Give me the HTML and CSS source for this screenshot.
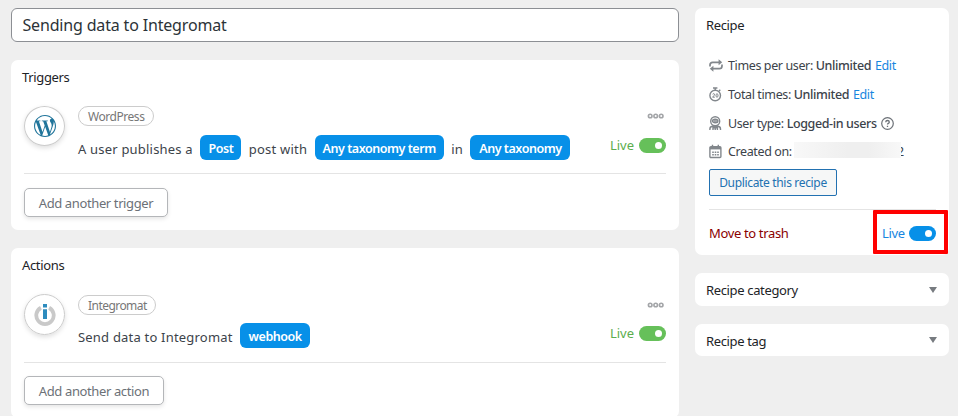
FILE: index.html
```html
<!DOCTYPE html>
<html lang="en">
<head>
<meta charset="utf-8">
<title>Recipe editor</title>
<link rel="stylesheet" href="styles.css">
</head>
<body>
<div class="layout">
  <main class="main">
    <div class="title-field"><span>Sending data to Integromat</span></div>

    <section class="card items-card">
      <h2 class="card-title">Triggers</h2>
      <div class="item">
        <div class="app-icon">
          <svg width="22" height="22" viewBox="0 0 24 24" fill="#21759b"><path d="M21.469 6.825c.84 1.537 1.318 3.3 1.318 5.175 0 3.979-2.156 7.456-5.363 9.325l3.295-9.527c.615-1.54.82-2.771.82-3.864 0-.405-.026-.78-.07-1.11m-7.981.105c.647-.03 1.232-.105 1.232-.105.582-.075.514-.93-.067-.899 0 0-1.755.135-2.88.135-1.064 0-2.85-.15-2.85-.15-.585-.03-.661.855-.075.885 0 0 .54.061 1.125.09l1.68 4.605-2.37 7.08L5.354 6.9c.649-.03 1.234-.1 1.234-.1.585-.075.516-.93-.065-.896 0 0-1.746.138-2.874.138-.2 0-.438-.008-.69-.015C4.911 3.15 8.235 1.215 12 1.215c2.809 0 5.365 1.072 7.286 2.833-.046-.003-.091-.009-.141-.009-1.06 0-1.812.923-1.812 1.914 0 .89.513 1.643 1.06 2.531.411.72.89 1.643.89 2.977 0 .915-.354 1.994-.821 3.479l-1.075 3.585-3.9-11.61.001.014zM12 22.784c-1.059 0-2.081-.153-3.048-.437l3.237-9.406 3.315 9.087c.024.053.05.101.078.149-1.12.393-2.325.609-3.582.609M1.211 12c0-1.564.336-3.05.935-4.39L7.29 21.709C3.694 19.96 1.212 16.271 1.211 12M12 0C5.385 0 0 5.385 0 12s5.385 12 12 12 12-5.385 12-12S18.615 0 12 0"/></svg>
        </div>
        <div class="item-body">
          <span class="app-name">WordPress</span>
          <div class="sentence">
            <span>A user publishes a</span><b class="token token-post">Post</b><span>post with</span><b class="token token-term">Any taxonomy term</b><span>in</span><b class="token token-tax">Any taxonomy</b>
          </div>
        </div>
        <div class="item-side">
          <svg class="dots" width="17" height="6" viewBox="0 0 17 6" fill="none" stroke="#a3a5a8" stroke-width="1.6"><circle cx="3.200" cy="3" r="1.800"/><circle cx="8.700" cy="3" r="1.800"/><circle cx="14.200" cy="3" r="1.800"/></svg>
          <div class="live live-green"><span>Live</span><i class="switch"></i></div>
        </div>
      </div>
      <button class="add-button add-trigger">Add another trigger</button>
    </section>

    <section class="card items-card">
      <h2 class="card-title">Actions</h2>
      <div class="item item-action">
        <div class="app-icon">
          <svg width="22" height="24" viewBox="0 0 22 24"><path d="M6.900 4.700A8.700 8.700 0 1 0 15.100 4.700" fill="none" stroke="#c9c9c9" stroke-width="3.800"/><path d="M9 1h4v3.600H9zM9 6.200h4V16H9z" fill="#2e8cbe"/></svg>
        </div>
        <div class="item-body">
          <span class="app-name">Integromat</span>
          <div class="sentence">
            <span>Send data to Integromat</span><b class="token token-hook">webhook</b>
          </div>
        </div>
        <div class="item-side">
          <svg class="dots" width="17" height="6" viewBox="0 0 17 6" fill="none" stroke="#a3a5a8" stroke-width="1.6"><circle cx="3.200" cy="3" r="1.800"/><circle cx="8.700" cy="3" r="1.800"/><circle cx="14.200" cy="3" r="1.800"/></svg>
          <div class="live live-green"><span>Live</span><i class="switch"></i></div>
        </div>
      </div>
      <button class="add-button add-action">Add another action</button>
    </section>
  </main>

  <aside class="sidebar">
    <section class="card recipe-card">
      <h2 class="card-title">Recipe</h2>
      <ul class="details">
        <li>
          <svg width="14" height="14" viewBox="0 0 14 14" fill="none" stroke="#82878c" stroke-width="1.700"><path d="M1 7.500V6Q1 3.300 3.700 3.300H10.500M13 5.500V7Q13 9.700 10.300 9.700H3.500"/><path d="M9.600 .3l3.600 3-3.600 3zM4.400 6.700L.8 9.700l3.600 3z" fill="#82878c" stroke="none"/></svg>
          <span>Times per user: <em>Unlimited</em> <a>Edit</a></span>
        </li>
        <li>
          <svg width="14" height="15" viewBox="0 0 14 15" fill="none" stroke="#82878c" stroke-width="1.400"><circle cx="6.200" cy="8.500" r="5.300"/><path d="M4 1h4.400M6.200 1v2M10 4l1.300-1.300"/><path d="M3.600 7.200q1.600-1.400 2 0 0 1-2 3h2.200M7 7.500q1-1.700 2 0v2q-1 1.500-2 0z" stroke-width="1"/></svg>
          <span>Total times: <em>Unlimited</em> <a>Edit</a></span>
        </li>
        <li>
          <svg width="14" height="15" viewBox="0 0 14 15" fill="none" stroke="#82878c" stroke-width="1.400"><circle cx="6.200" cy="5.200" r="4.500"/><ellipse cx="6.200" cy="5" rx="2.700" ry="1.800"/><path d="M4.500 5h3.400M.9 14v-1q0-2.300 2.500-2.700h5.600q2.500.4 2.500 2.700v1M4 14v-2.200h4.400V14M6.200 12v2"/></svg>
          <span>User type: <em>Logged-in users</em></span>
          <svg class="help" width="13" height="13" viewBox="0 0 13 13" fill="none" stroke="#6c7177" stroke-width="1.200"><circle cx="6.500" cy="6.500" r="5.800"/><path d="M4.700 5.200q.1-1.700 1.800-1.700t1.800 1.500q0 .9-1 1.400-.8.400-.8 1.200M6.500 8.800v1.200" stroke-width="1.300"/></svg>
        </li>
        <li class="created">
          <svg width="14" height="15" viewBox="0 0 14 15" fill="none" stroke="#82878c" stroke-width="1.400"><rect x=".9" y="2.700" width="11" height="10.800" rx="1"/><path d="M1 4.200h11" stroke-width="2.400"/><path d="M3.500.7v3M9.300.7v3"/><path d="M3.200 8.200h6.600M3.200 10.700h6.600" stroke-dasharray="1.600 .9"/></svg>
          <span class="created-label">Created on:</span><span class="date"><i class="redacted"></i><span class="date-end">2</span></span>
        </li>
      </ul>
      <button class="duplicate">Duplicate this recipe</button>
      <footer class="recipe-footer">
        <a class="trash">Move to trash</a>
        <div class="live live-blue highlight"><span>Live</span><i class="switch"></i></div>
      </footer>
    </section>
    <section class="card collapsed category"><h2 class="card-title">Recipe category</h2><i class="arrow"></i></section>
    <section class="card collapsed tag"><h2 class="card-title">Recipe tag</h2><i class="arrow"></i></section>
  </aside>
</div>
</body>
</html>
```

FILE: styles.css
```css
* { box-sizing: border-box; }
body {
  margin: 0;
  height: 416px;
  overflow: hidden;
  background: #efefef;
  color: #3c434a;
  font: 13px/20px "Noto Sans", "Open Sans", sans-serif;
}
.layout {
  display: grid;
  grid-template-columns: 668px 254px;
  column-gap: 16px;
  padding: 8px 9px 0 11px;
}
.main, .sidebar { display: flex; flex-direction: column; gap: 18px; min-width: 0; }
.title-field {
  height: 34px;
  border: 1px solid #8c8f94;
  border-radius: 6px;
  background: #fff;
  padding: 0 10.500px;
  font-size: 16px;
  line-height: 33px;
  letter-spacing: -.17px;
  color: #2c3338;
}
.card { background: #fff; border-radius: 7px; }
.card-title {
  margin: 0;
  font-size: 13px;
  font-weight: 400;
  line-height: 34px;
  color: #1d2327;
  letter-spacing: -.35px;
}
.items-card { height: 170px; padding: 0 13px; }
.items-card .card-title { margin-left: -2px; }
.item {
  display: flex;
  height: 80px;
  border-bottom: 1px solid #e4e4e4;
}
.item-action { height: 81px; }
.app-icon {
  display: flex;
  align-items: center;
  justify-content: center;
  width: 41px;
  height: 40px;
  margin: 12px 13px 0 0;
  border: 1px solid #ccc;
  border-radius: 50%;
  box-shadow: 0 2px 5px rgba(0, 0, 0, .13);
}
.item-action .app-icon { height: 41px; }
.item-body { flex: 1; padding-top: 12px; }
.item-action .item-body { padding-top: 13px; }
.app-name {
  display: block;
  width: max-content;
  height: 20px;
  padding: 0 8.500px 0 9px;
  border: 1px solid #ccc;
  border-radius: 10px;
  font-size: 12px;
  line-height: 19px;
  letter-spacing: -.45px;
  color: #777;
}
.item-action .app-name { letter-spacing: -.55px; }
.sentence {
  display: flex;
  align-items: center;
  gap: 7.500px;
  height: 25px;
  margin-top: 9px;
  white-space: nowrap;
  letter-spacing: .2px;
}
.sentence span { padding-top: 2px; }
.item-action .sentence { margin-top: 8px; }
.token {
  height: 25px;
  border-radius: 6px;
  background: #0790e8;
  color: #fff;
  font-size: 12.500px;
  font-weight: 600;
  line-height: 27px;
  text-align: center;
  letter-spacing: -.45px;
}
.token-post { width: 41px; }
.token-term { width: 129px; }
.token-tax { width: 100px; }
.token-hook { width: 70px; }
.item-side { display: flex; flex-direction: column; align-items: flex-end; padding-top: 19px; }
.item-action .item-side { padding-top: 20px; }
.dots { margin-right: 2px; }
.live { display: flex; align-items: center; gap: 5px; height: 20px; font-size: 13px; }
.item-side .live { margin-top: 16px; }
.item-action .item-side .live { margin-top: 15px; }
.live-green { color: #5bad4e; }
.live-blue { color: #1786e0; letter-spacing: -.3px; }
.switch {
  display: block;
  width: 27px;
  height: 15px;
  padding: 4px 4px 0 16px;
  border-radius: 8px;
  background: #66c05a;
}
.live-blue .switch { background: #0790e8; }
.switch::after { content: ""; display: block; width: 7px; height: 7px; border-radius: 50%; background: #fff; }
button { font-family: inherit; }
.add-button {
  display: block;
  height: 29px;
  margin-top: 14px;
  padding: 0;
  border: 1px solid #b4b6b9;
  border-radius: 5px;
  background: #fff;
  box-shadow: 0 2px 4px rgba(0, 0, 0, .1);
  color: #6c7177;
  font-size: 13px;
  letter-spacing: -.38px;
}
.add-trigger { width: 144px; }
.add-action { width: 140px; margin-top: 13px; }
.recipe-card { height: 247px; padding: 0 13px 0 14px; }
.recipe-card .card-title { margin-left: -3px; }
.details { list-style: none; margin: 9px 0 0; padding: 0; }
.details li { display: flex; align-items: center; height: 29px; gap: 5px; white-space: nowrap; font-size: 12.500px; letter-spacing: -.38px; }
.details .created { height: 27px; }
.details em { font-style: normal; font-weight: 500; }
.details a { color: #1786e0; margin-left: 1px; }
.help { margin-left: -1px; }
.created-label { width: 64px; }
.date { display: flex; align-items: center; margin-left: -3px; }
.redacted { position: relative; z-index: 1; width: 107px; height: 16px; margin-top: -3px; background: linear-gradient(90deg, #f8f8f8, #efefef 50%, #efefef 70%, #f8f8f8); }
.date-end { margin-left: -4px; }
.duplicate {
  display: block;
  width: 128px;
  height: 27px;
  margin-top: 4px;
  padding: 0;
  border: 1px solid #2271b1;
  border-radius: 2px;
  background: #f6f7f7;
  color: #2271b1;
  font-size: 12px;
  letter-spacing: -.33px;
}
.recipe-footer {
  display: flex;
  justify-content: space-between;
  margin-top: 13px;
  border-top: 1px solid #e4e4e4;
}
.trash { color: #8a0000; line-height: 46px; letter-spacing: -.35px; }
.highlight {
  width: 75px;
  height: 44px;
  margin-right: -12px;
  border: 4px solid #f00;
  border-radius: 1px;
  padding: 2px 0 0 5px;
  gap: 4px;
}
.collapsed { display: flex; align-items: center; justify-content: space-between; padding: 0 12px 0 11px; }
.category { height: 33px; }
.tag { height: 32px; }
.tag .card-title { padding-top: 2px; }
.arrow { border: 4px solid transparent; border-top: 6px solid #777b80; border-bottom: 0; }
```
